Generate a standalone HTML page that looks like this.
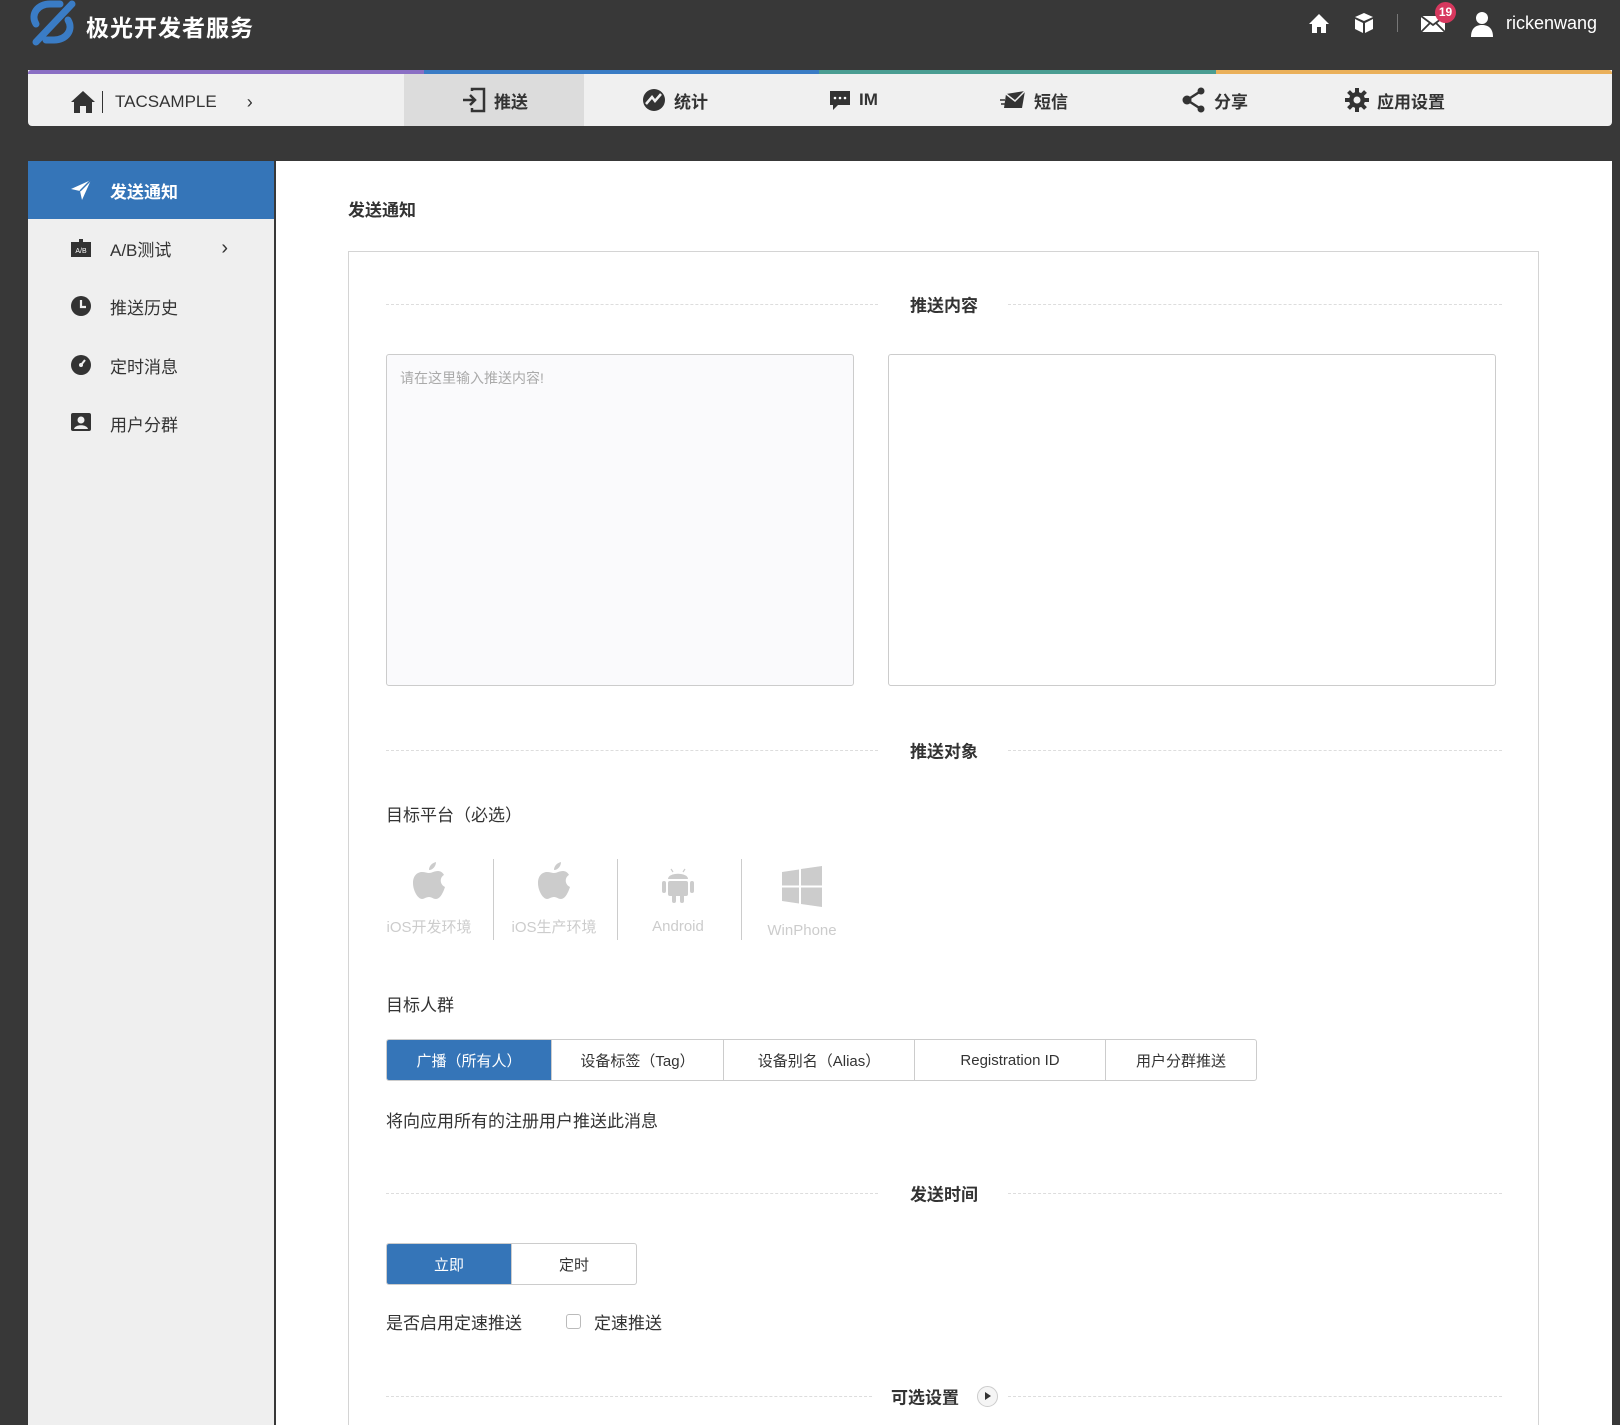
<!DOCTYPE html>
<html style="overflow:hidden"><head><meta charset="utf-8"><style>
*{margin:0;padding:0;box-sizing:border-box}
html,body{width:1620px;height:1425px;overflow:hidden}
body{background:#383838;font-family:"Liberation Sans","Noto Sans CJK SC",sans-serif;position:relative;color:#333}
.a{position:absolute}
.nav{left:28px;top:70px;width:1584px;height:56px;background:#f0f0f0;border-radius:0 0 4px 4px}
.bar{top:70px;height:4px}
.ni{top:74px;height:52px;display:flex;align-items:center;font-size:17px;font-weight:bold;color:#333;white-space:nowrap}
.ni svg{margin-right:8px}
.side{left:28px;top:161px;width:246px;height:1264px;background:#efefef}
.si{left:28px;width:246px;height:58px;display:flex;align-items:center;font-size:17px;color:#333;padding-left:42px}
.si svg{margin-right:18px}
.main{left:276px;top:161px;width:1336px;height:1264px;background:#fff}
.box{left:348px;top:251px;width:1191px;height:1180px;border:1px solid #d4d4d4;border-bottom:none}
.dash{height:0;border-top:1px dashed #ddd}
.sh{font-size:17px;font-weight:bold;color:#333;transform:translate(-50%,-50%);white-space:nowrap}
.lbl{font-size:17px;color:#333}
.plat{width:124px;text-align:center;color:#ccc;font-size:15px}
.vd{width:1px;background:#ccc;top:859px;height:81px}
.bg{display:flex;border:1px solid #ccc;border-radius:3px;overflow:hidden}
.bg div{display:flex;align-items:center;justify-content:center;font-size:15px;color:#333;border-left:1px solid #ccc}
.bg div:first-child{border-left:none}
.bg .on{background:#3575b8;color:#fff}
</style></head><body>
<svg class="a" style="left:28px;top:0" width="50" height="46" viewBox="0 0 50 46"><g fill="none" stroke="#3a7cc5" stroke-width="7" stroke-linecap="round"><path d="M8 24 C2 14 10 4 22 4 L32 4"/><path d="M44 4 L8 42"/><path d="M40 20 C46 30 38 40 26 40 L18 40"/></g></svg>
<div class="a" style="left:86px;top:9px;font-size:23px;font-weight:bold;color:#fff;letter-spacing:1px">极光开发者服务</div>
<svg class="a" style="left:1308px;top:13px" width="22" height="21" viewBox="0 0 22 21"><path d="M11 1 L1 11 H4 V20 H9 V14 H13 V20 H18 V11 H21 Z" fill="#fff"/></svg>
<svg class="a" style="left:1354px;top:12px" width="20" height="22" viewBox="0 0 20 22"><path d="M10 1 L19 5 L10 9 L1 5 Z M1 7 L9 11 V21 L1 17 Z M19 7 L11 11 V21 L19 17 Z" fill="#fff"/></svg>
<div class="a" style="left:1397px;top:14px;width:1px;height:18px;background:#777"></div>
<svg class="a" style="left:1420px;top:15px" width="26" height="18" viewBox="0 0 26 18"><rect x="1" y="1" width="24" height="16" fill="#fff"/><path d="M1 1 L13 10 L25 1 M1 17 L10 8 M25 17 L16 8" stroke="#383838" stroke-width="1.8" fill="none"/></svg>
<div class="a" style="left:1435px;top:2px;width:21px;height:21px;border-radius:50%;background:#d7385e;color:#fff;font-size:12px;font-weight:bold;text-align:center;line-height:21px">19</div>
<svg class="a" style="left:1470px;top:11px" width="24" height="26" viewBox="0 0 24 26"><circle cx="12" cy="7" r="6" fill="#fff"/><path d="M1 26 C1 17 6 14 12 14 C18 14 23 17 23 26 Z" fill="#fff"/></svg>
<div class="a" style="left:1506px;top:13px;font-size:18px;color:#fff">rickenwang</div>
<div class="a nav"></div>
<div class="a bar" style="left:28px;width:396px;background:#8a6fc4;border-radius:3px 0 0 0"></div>
<div class="a bar" style="left:424px;width:395px;background:#3a7cc5"></div>
<div class="a bar" style="left:819px;width:397px;background:#4a9d92"></div>
<div class="a bar" style="left:1216px;width:396px;background:#eab05a;border-radius:0 3px 0 0"></div>
<div class="a" style="left:404px;top:74px;width:180px;height:52px;background:#dcdcdc"></div>
<div class="a ni" style="left:70px;font-weight:normal;font-size:17px;top:76px"><svg width="26" height="24" viewBox="0 0 26 24"><path d="M13 1 L1 12 H4 V23 H10 V16 H16 V23 H22 V12 H25 Z" fill="#333"/></svg><span style="display:inline-block;width:1px;height:22px;background:#333;margin:0 12px 0 -2px"></span>TACSAMPLE<span style="margin-left:30px;font-size:18px">›</span></div>
<div class="a ni" style="left:462px"><svg width="24" height="26" viewBox="0 0 24 26"><path d="M1 13 H12 M8 8 L13 13 L8 18" stroke="#333" stroke-width="2.5" fill="none"/><path d="M10 4 V2 H22 V24 H10 V21" stroke="#333" stroke-width="2.5" fill="none"/></svg>推送</div>
<div class="a ni" style="left:642px"><svg width="24" height="24" viewBox="0 0 24 24"><circle cx="12" cy="12" r="11" fill="#333"/><path d="M4 16 L10 9 L13 13 L19 6" stroke="#f0f0f0" stroke-width="2.5" fill="none"/></svg>统计</div>
<div class="a ni" style="left:829px"><svg width="22" height="22" viewBox="0 0 22 22"><rect x="1" y="2" width="20" height="14" fill="#333"/><path d="M4 16 V21 L9 16" fill="#333"/><circle cx="6" cy="9" r="1.3" fill="#fff"/><circle cx="11" cy="9" r="1.3" fill="#fff"/><circle cx="16" cy="9" r="1.3" fill="#fff"/></svg>IM</div>
<div class="a ni" style="left:1000px"><svg width="26" height="20" viewBox="0 0 26 20"><path d="M6 4 L25 1 L22 18 L4 18 Z" fill="#333"/><path d="M6 4 L15 11 L25 1" stroke="#f0f0f0" stroke-width="1.5" fill="none"/><path d="M0 10 H5 M1 14 H5" stroke="#333" stroke-width="1.5"/></svg>短信</div>
<div class="a ni" style="left:1182px"><svg width="24" height="26" viewBox="0 0 24 26"><circle cx="5" cy="13" r="4.5" fill="#333"/><circle cx="19" cy="4" r="3.5" fill="#333"/><circle cx="19" cy="22" r="3.5" fill="#333"/><path d="M5 13 L19 4 M5 13 L19 22" stroke="#333" stroke-width="2.5"/></svg>分享</div>
<div class="a ni" style="left:1345px"><svg width="24" height="24" viewBox="0 0 24 24"><g fill="#333"><circle cx="12" cy="12" r="8"/><rect x="10" y="0" width="4" height="24"/><rect x="0" y="10" width="24" height="4"/><rect x="10" y="0" width="4" height="24" transform="rotate(45 12 12)"/><rect x="10" y="0" width="4" height="24" transform="rotate(-45 12 12)"/></g><circle cx="12" cy="12" r="3.5" fill="#f0f0f0"/></svg>应用设置</div>
<div class="a side"></div>
<div class="a si" style="top:161px;background:#3575b8;color:#fff;font-weight:bold"><svg width="22" height="22" viewBox="0 0 22 22"><path d="M1 10 L21 1 L12 21 L10 12 Z" fill="#fff"/><path d="M10 12 L21 1" stroke="#3575b8" stroke-width="1.5"/></svg>发送通知</div>
<div class="a si" style="top:219px"><svg width="22" height="20" viewBox="0 0 22 20"><rect x="1" y="4" width="20" height="15" fill="#333"/><rect x="9" y="1" width="4" height="3" fill="#333"/><text x="11" y="15" font-size="7" fill="#fff" text-anchor="middle" font-family="Liberation Sans">A/B</text></svg>A/B测试<span style="margin-left:50px;font-size:20px">›</span></div>
<div class="a si" style="top:277px"><svg width="22" height="22" viewBox="0 0 22 22"><circle cx="11" cy="11" r="10" fill="#333"/><path d="M11 5 V12 H16" stroke="#efefef" stroke-width="2.2" fill="none"/></svg>推送历史</div>
<div class="a si" style="top:336px"><svg width="22" height="22" viewBox="0 0 22 22"><circle cx="11" cy="11" r="10" fill="#333"/><path d="M11 11 L15 6" stroke="#efefef" stroke-width="2"/><circle cx="11" cy="11" r="2" fill="#efefef"/></svg>定时消息</div>
<div class="a si" style="top:394px"><svg width="22" height="22" viewBox="0 0 22 22"><rect x="1" y="1" width="20" height="18" rx="2" fill="#333"/><circle cx="11" cy="8" r="3.5" fill="#efefef"/><path d="M4 17 C5 12 17 12 18 17 Z" fill="#efefef"/></svg>用户分群</div>
<div class="a main"></div>
<div class="a" style="left:348px;top:196px;font-size:17px;font-weight:bold">发送通知</div>
<div class="a box"></div>
<div class="a dash" style="left:386px;top:304px;width:492px"></div>
<div class="a dash" style="left:1008px;top:304px;width:494px"></div>
<div class="a sh" style="left:944px;top:304px">推送内容</div>
<div class="a" style="left:386px;top:354px;width:468px;height:332px;border:1px solid #ccc;border-radius:3px;background:#fafafc"></div>
<div class="a" style="left:400px;top:368px;font-size:14px;color:#aaa">请在这里输入推送内容!</div>
<div class="a" style="left:888px;top:354px;width:608px;height:332px;border:1px solid #ccc;border-radius:3px;background:#fff"></div>
<div class="a dash" style="left:386px;top:750px;width:492px"></div>
<div class="a dash" style="left:1008px;top:750px;width:494px"></div>
<div class="a sh" style="left:944px;top:750px">推送对象</div>
<div class="a lbl" style="left:386px;top:801px">目标平台（必选）</div>
<div class="a plat" style="left:367px;top:862px"><svg width="34" height="40" viewBox="0 0 34 40"><path d="M17 11 C20 11 22 9 26 9 C29 9 31 11 32 13 C28 15 27 22 33 25 C31 31 28 37 24 37 C21 37 20 35 17 35 C14 35 12 37 10 37 C6 37 1 29 1 21 C1 13 6 10 10 10 C13 10 15 11 17 11 Z M17 8 C17 4 20 1 24 0 C24 4 21 8 17 8 Z" fill="#ccc"/></svg><div style="margin-top:10px">iOS开发环境</div></div>
<div class="a vd" style="left:493px"></div>
<div class="a plat" style="left:492px;top:862px"><svg width="34" height="40" viewBox="0 0 34 40"><path d="M17 11 C20 11 22 9 26 9 C29 9 31 11 32 13 C28 15 27 22 33 25 C31 31 28 37 24 37 C21 37 20 35 17 35 C14 35 12 37 10 37 C6 37 1 29 1 21 C1 13 6 10 10 10 C13 10 15 11 17 11 Z M17 8 C17 4 20 1 24 0 C24 4 21 8 17 8 Z" fill="#ccc"/></svg><div style="margin-top:10px">iOS生产环境</div></div>
<div class="a vd" style="left:617px"></div>
<div class="a plat" style="left:616px;top:866px"><svg width="34" height="38" viewBox="0 0 34 38"><g fill="#ccc"><path d="M7 13 C7 6 27 6 27 13 Z"/><rect x="7" y="15" width="20" height="15" rx="2"/><rect x="1" y="15" width="4" height="12" rx="2"/><rect x="29" y="15" width="4" height="12" rx="2"/><rect x="11" y="28" width="4" height="9" rx="2"/><rect x="19" y="28" width="4" height="9" rx="2"/></g><path d="M10 3 L12 6 M24 3 L22 6" stroke="#ccc" stroke-width="1.2"/></svg><div style="margin-top:10px">Android</div></div>
<div class="a vd" style="left:741px"></div>
<div class="a plat" style="left:740px;top:866px"><svg width="40" height="42" viewBox="0 0 40 42"><g fill="#ccc"><path d="M0 6 L17 3.5 V19.5 H0 Z"/><path d="M19 3 L40 0 V19.5 H19 Z"/><path d="M0 21.5 H17 V37.5 L0 35 Z"/><path d="M19 21.5 H40 V41 L19 38 Z"/></g></svg><div style="margin-top:10px">WinPhone</div></div>
<div class="a lbl" style="left:386px;top:991px">目标人群</div>
<div class="a bg" style="left:386px;top:1039px;width:871px;height:42px"><div class="on" style="width:164px">广播（所有人）</div><div style="width:172px">设备标签（Tag）</div><div style="width:191px">设备别名（Alias）</div><div style="width:191px">Registration ID</div><div style="flex:1">用户分群推送</div></div>
<div class="a lbl" style="left:386px;top:1107px">将向应用所有的注册用户推送此消息</div>
<div class="a dash" style="left:386px;top:1193px;width:492px"></div>
<div class="a dash" style="left:1008px;top:1193px;width:494px"></div>
<div class="a sh" style="left:944px;top:1193px">发送时间</div>
<div class="a bg" style="left:386px;top:1243px;width:251px;height:42px"><div class="on" style="width:124px">立即</div><div style="flex:1">定时</div></div>
<div class="a lbl" style="left:386px;top:1309px">是否启用定速推送</div>
<div class="a" style="left:566px;top:1314px;width:15px;height:15px;border:1px solid #bbb;border-radius:3px"></div>
<div class="a lbl" style="left:594px;top:1309px">定速推送</div>
<div class="a dash" style="left:386px;top:1396px;width:486px"></div>
<div class="a dash" style="left:1008px;top:1396px;width:494px"></div>
<div class="a sh" style="left:925px;top:1396px">可选设置</div>
<div class="a" style="left:977px;top:1386px;width:21px;height:21px;border-radius:50%;border:1px solid #ccc;background:#f5f5f5"></div>
<div class="a" style="left:985px;top:1392px;width:0;height:0;border-left:6px solid #333;border-top:4px solid transparent;border-bottom:4px solid transparent"></div>
</body></html>
